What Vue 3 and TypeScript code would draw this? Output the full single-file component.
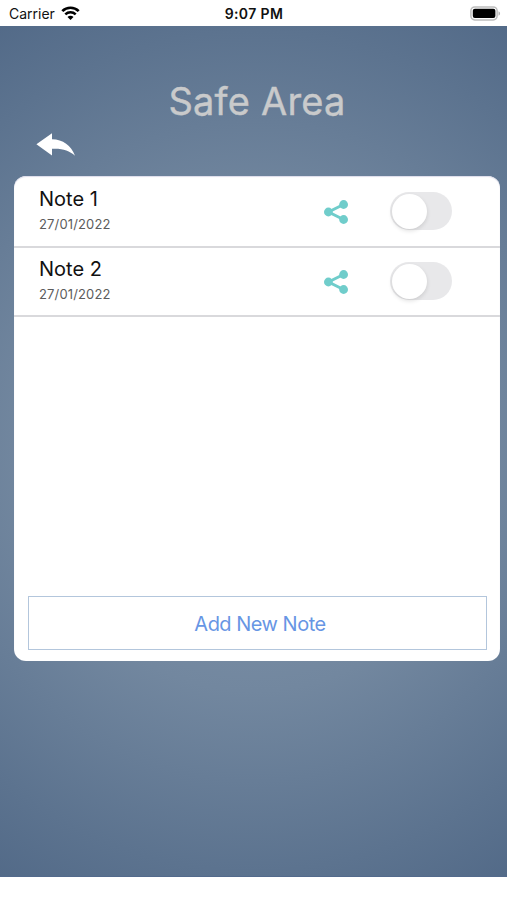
<script setup lang="ts">
import { ref } from 'vue'

interface Note {
  id: number
  title: string
  date: string
  locked: boolean
}

const notes = ref<Note[]>([
  { id: 1, title: 'Note 1', date: '27/01/2022', locked: false },
  { id: 2, title: 'Note 2', date: '27/01/2022', locked: false },
])

function addNote(): void {
  const id = notes.value.length + 1
  notes.value.push({ id, title: `Note ${id}`, date: '27/01/2022', locked: false })
}
</script>

<template>
  <div class="screen">
    <header class="status">
      <div class="carrier">
        <span class="carrier-name">Carrier</span>
        <svg class="wifi" width="19" height="14" viewBox="0 0 19 14" fill="none">
          <path d="M1.3 5.1C5.9.6 13.1.6 17.7 5.1" stroke="#000" stroke-width="2.7" />
          <path d="M4.3 8.3c2.9-2.8 7.5-2.8 10.4 0" stroke="#000" stroke-width="2.5" />
          <path d="M9.5 13.9 6.5 10.9c1.6-1.6 4.4-1.6 6 0z" fill="#000" />
        </svg>
      </div>
      <span class="time">9:07 PM</span>
      <svg class="battery" width="31" height="15" viewBox="0 0 31 15">
        <rect x=".9" y=".9" width="26.2" height="13" rx="3.8" fill="#fff" stroke="#bdbdbd" stroke-width="1.5" />
        <rect x="2.8" y="2.8" width="22.6" height="9.2" rx="2" fill="#000" />
        <path d="M28.5 5.2c2.1.8 2.1 3.7 0 4.5z" fill="#b5b5b5" />
      </svg>
    </header>

    <main class="body">
      <h1 class="title">Safe Area</h1>
      <button class="back" type="button" aria-label="Back">
        <svg width="40" height="24" viewBox="0 0 40 24">
          <path d="M.4 11.2 16 .2v6C27 6.5 35 12.2 39 22.8c-5.8-5.5-12.5-7.5-23-7v6.6z" fill="#fff" />
        </svg>
      </button>

      <section class="card">
        <ul class="list">
          <li v-for="note in notes" :key="note.id" class="row">
            <div class="text">
              <span class="name">{{ note.title }}</span>
              <span class="date">{{ note.date }}</span>
            </div>
            <button class="share" type="button" aria-label="Share">
              <svg width="24" height="24" viewBox="0 0 24 24">
                <path d="M19.5 4.5 4.5 12l15 7.5" fill="none" stroke="#70cdcb" stroke-width="3" />
                <circle cx="19.6" cy="4.5" r="4.4" fill="#70cdcb" />
                <circle cx="4.4" cy="12" r="4.4" fill="#70cdcb" />
                <circle cx="19.6" cy="19.5" r="4.4" fill="#70cdcb" />
              </svg>
            </button>
            <button
              class="switch"
              :class="{ on: note.locked }"
              type="button"
              role="switch"
              :aria-checked="note.locked"
              @click="note.locked = !note.locked"
            >
              <span class="knob"></span>
            </button>
          </li>
        </ul>
        <button class="add" type="button" @click="addNote">Add New Note</button>
      </section>
    </main>
  </div>
</template>

<style>
body {
  background: #fff;
}
</style>

<style scoped>
.screen {
  display: flex;
  flex-direction: column;
  width: 507px;
  height: 900px;
  overflow: hidden;
  font-family: Inter, "Liberation Sans", sans-serif;
  color: #111;
}

button {
  margin: 0;
  padding: 0;
  border: 0;
  background: none;
  font: inherit;
}

svg {
  display: block;
}

.status {
  display: grid;
  grid-template-columns: 1fr auto 1fr;
  align-items: center;
  height: 25.5px;
  padding: 2px 6px 0 9px;
  box-sizing: border-box;
  font-size: 14px;
  line-height: 20px;
  flex: none;
}

.carrier {
  display: flex;
  align-items: center;
  gap: 6px;
}

.carrier-name {
  letter-spacing: 0;
}

.wifi {
  margin-top: -2px;
}

.time {
  margin-right: 2px;
  font-size: 14px;
  font-weight: 600;
  letter-spacing: 0.4px;
}

.battery {
  justify-self: end;
  margin-top: -1px;
}

.body {
  display: flex;
  flex-direction: column;
  align-items: flex-start;
  height: 851px;
  box-sizing: border-box;
  padding: 49.5px 7px 0 14px;
  background: radial-gradient(ellipse 480px 500px at 50% 50%, #8497ad 0%, #72879f 48%, #5c738f 84%, #4d6584 110%);
  border-bottom: 1px solid #536a8c;
  flex: none;
}

.title {
  align-self: center;
  margin: 0;
  font-size: 38px;
  line-height: 52px;
  font-weight: 400;
  letter-spacing: 0.2px;
  color: #c9cacb;
  -webkit-text-stroke: 0.4px #c9cacb;
  white-space: nowrap;
}

.back {
  margin: 6px 0 0 22px;
}

.card {
  display: flex;
  flex-direction: column;
  justify-content: space-between;
  width: 486px;
  height: 485px;
  margin-top: 19px;
  padding-bottom: 11px;
  box-sizing: border-box;
  border-radius: 12px;
  background: #fff;
  box-shadow: inset 0 1px 1px #dcdcea;
}

.list {
  margin: 0;
  padding: 0;
  list-style: none;
}

.row {
  display: flex;
  align-items: center;
  height: 69.7px;
  padding: 0 48px 0 25px;
  box-sizing: border-box;
  border-bottom: 2px solid #d9d9dc;
}

.row:first-child {
  height: 71.5px;
  padding-top: 1px;
}

.text {
  display: flex;
  flex: 1;
  flex-direction: column;
}

.name {
  font-size: 20px;
  line-height: 26px;
}

.date {
  font-size: 13px;
  line-height: 24px;
  letter-spacing: 0.15px;
  color: #5c5c5c;
}

.share {
  margin: 1px 42px 0 0;
}

.switch {
  display: flex;
  width: 62px;
  height: 38px;
  padding: 1.5px;
  box-sizing: border-box;
  border-radius: 19px;
  background: #e8e8ea;
}

.switch.on {
  justify-content: flex-end;
  background: #70cdcb;
}

.knob {
  width: 35px;
  height: 35px;
  border-radius: 50%;
  background: #fff;
  box-shadow: 0 2px 4px rgba(0, 0, 0, 0.12);
}

.add {
  height: 54px;
  margin: 0 13px 0 14px;
  padding: 2px 0 0 5px;
  border: 1.5px solid #b3c6dc;
  font-size: 20px;
  letter-spacing: -0.5px;
  color: #6796e4;
}
</style>
